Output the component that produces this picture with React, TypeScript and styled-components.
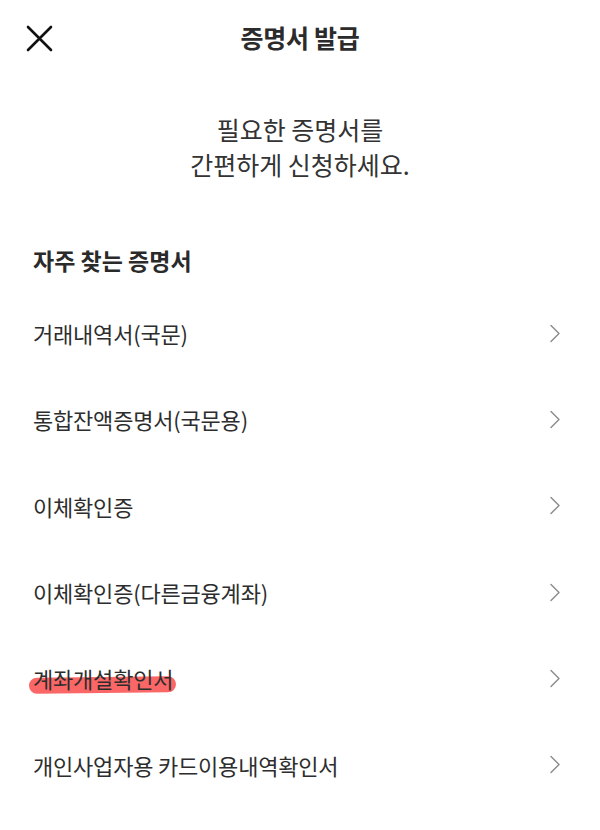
import React from "react";
import styled, { createGlobalStyle } from "styled-components";

const GlobalStyle = createGlobalStyle`
  html, body {
    margin: 0;
    padding: 0;
    background: #ffffff;
  }
  body {
    font-family: "Noto Sans CJK KR", "Noto Sans", sans-serif;
    color: #222;
  }
`;

const Page = styled.div`
  width: 600px;
  min-height: 830px;
  background: #fff;
`;

const Header = styled.header`
  position: relative;
  height: 76px;
  display: flex;
  align-items: center;
  justify-content: center;
`;

const CloseButton = styled.button`
  position: absolute;
  left: 24px;
  top: 23px;
  width: 31px;
  height: 31px;
  padding: 0;
  border: none;
  background: none;
  display: flex;
  align-items: center;
  justify-content: center;
  cursor: pointer;
`;

const Title = styled.h1`
  margin: -2px 0 0;
  font-size: 25px;
  font-weight: 700;
  color: #2b2b2b;
  letter-spacing: -0.3px;
`;

const Intro = styled.p`
  margin: 36px 0 0;
  text-align: center;
  font-size: 25px;
  line-height: 35px;
  font-weight: 400;
  color: #333;
`;

const SectionTitle = styled.h2`
  margin: 63px 0 0;
  padding: 0 33px;
  font-size: 23px;
  line-height: 30px;
  font-weight: 700;
  color: #2a2a2a;
`;

const List = styled.ul`
  list-style: none;
  margin: 15px 0 0;
  padding: 0;
`;

const Row = styled.li`
  height: 86.3px;
  display: flex;
  align-items: center;
  justify-content: space-between;
  padding: 0 39px 0 33px;
  cursor: pointer;
`;

const Label = styled.span<{ $marked?: boolean }>`
  position: relative;
  font-size: 22px;
  line-height: 30px;
  color: #2d2d2d;
  letter-spacing: -0.2px;

  ${(p) =>
    p.$marked &&
    `
    &::before {
      content: "";
      position: absolute;
      left: -4px;
      right: -3px;
      top: 15px;
      height: 16px;
      border-radius: 8px;
      background: #fb5a5a;
      opacity: 0.92;
      transform: rotate(-0.6deg);
      z-index: -1;
    }
  `}
`;

const LabelWrap = styled.span`
  position: relative;
  z-index: 0;
`;

const Chevron = () => (
  <svg width="12" height="19" viewBox="0 0 12 19" fill="none">
    <path d="M2 1.5 L10 9.5 L2 17.5" stroke="#8a8a8a" strokeWidth="1.4" strokeLinecap="round" strokeLinejoin="round" />
  </svg>
);

const CloseIcon = () => (
  <svg width="27" height="27" viewBox="0 0 27 27" fill="none">
    <path d="M2 2 L25 25 M25 2 L2 25" stroke="#111" strokeWidth="2.6" strokeLinecap="round" />
  </svg>
);

const items: { label: string; marked?: boolean }[] = [
  { label: "거래내역서(국문)" },
  { label: "통합잔액증명서(국문용)" },
  { label: "이체확인증" },
  { label: "이체확인증(다른금융계좌)" },
  { label: "계좌개설확인서", marked: true },
  { label: "개인사업자용 카드이용내역확인서" },
];

export default function App() {
  return (
    <>
      <GlobalStyle />
      <Page>
        <Header>
          <CloseButton aria-label="닫기">
            <CloseIcon />
          </CloseButton>
          <Title>증명서 발급</Title>
        </Header>
        <Intro>
          필요한 증명서를
          <br />
          간편하게 신청하세요.
        </Intro>
        <SectionTitle>자주 찾는 증명서</SectionTitle>
        <List>
          {items.map((item) => (
            <Row key={item.label}>
              <LabelWrap>
                <Label $marked={item.marked}>{item.label}</Label>
              </LabelWrap>
              <Chevron />
            </Row>
          ))}
        </List>
      </Page>
    </>
  );
}
